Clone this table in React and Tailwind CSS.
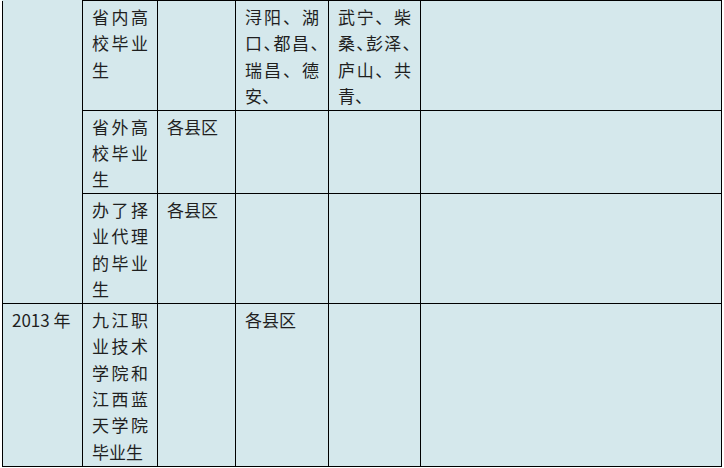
const FONT = "font-['Noto_Sans_CJK_SC','Noto_Sans',sans-serif]";

// one cell line per entry; all but the last are stretched to the full width
function Lines({ lines }) {
  return (
    <div className="leading-[26.4px]">
      {lines.map((l, i) => (
        <div key={i} className={i < lines.length - 1 ? '[text-align-last:justify] text-justify' : 'text-left'}>
          {l}
        </div>
      ))}
    </div>
  );
}

const H = ({ children }) => <span className="[font-feature-settings:'halt']">{children}</span>;

function Cell({ children, className = '', ...rest }) {
  return (
    <td className={`border border-black px-[9px] pt-[3px] pb-0 align-top leading-[26.4px] ${className}`} {...rest}>
      {children}
    </td>
  );
}

export default function App() {
  return (
    <div className={`min-h-[468px] w-[724px] bg-white pl-[2px] text-[17px] text-[#1f1f1f] ${FONT}`}>
      <table className="w-[720px] table-fixed border-collapse bg-[#d5e8ec]">
        <colgroup>
          <col className="w-[80px]" />
          <col className="w-[75px]" />
          <col className="w-[78px]" />
          <col className="w-[93px]" />
          <col className="w-[92px]" />
          <col />
        </colgroup>
        <tbody>
          <tr className="h-[109px]">
            <Cell rowSpan={3} className="border-t-0" />
            <Cell>
              <Lines lines={['省内高', '校毕业', '生']} />
            </Cell>
            <Cell />
            <Cell>
              <Lines
                lines={[
                  '浔阳、湖',
                  <>口<H>、</H>都昌<H>、</H></>,
                  '瑞昌、德',
                  '安、',
                ]}
              />
            </Cell>
            <Cell>
              <Lines
                lines={[
                  '武宁、柴',
                  <>桑<H>、</H>彭泽<H>、</H></>,
                  '庐山、共',
                  '青、',
                ]}
              />
            </Cell>
            <Cell />
          </tr>
          <tr className="h-[83px]">
            <Cell>
              <Lines lines={['省外高', '校毕业', '生']} />
            </Cell>
            <Cell>
              <Lines lines={['各县区']} />
            </Cell>
            <Cell />
            <Cell />
            <Cell />
          </tr>
          <tr className="h-[110px]">
            <Cell>
              <Lines lines={['办了择', '业代理', '的毕业', '生']} />
            </Cell>
            <Cell>
              <Lines lines={['各县区']} />
            </Cell>
            <Cell />
            <Cell />
            <Cell />
          </tr>
          <tr className="h-[163px]">
            <Cell>
              <Lines lines={['2013\u00a0年']} />
            </Cell>
            <Cell>
              <Lines lines={['九江职', '业技术', '学院和', '江西蓝', '天学院', '毕业生']} />
            </Cell>
            <Cell />
            <Cell>
              <Lines lines={['各县区']} />
            </Cell>
            <Cell />
            <Cell />
          </tr>
        </tbody>
      </table>
    </div>
  );
}
